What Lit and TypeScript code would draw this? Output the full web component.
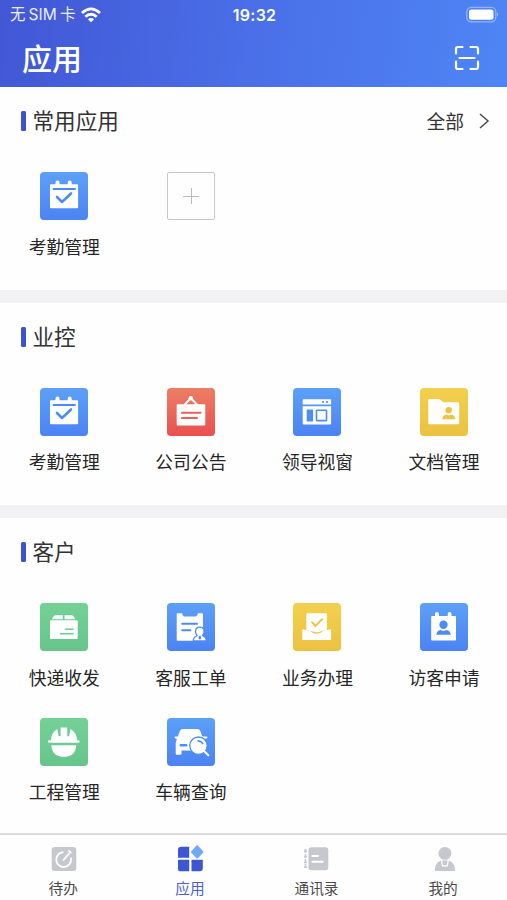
import { LitElement, html, css, svg, TemplateResult, SVGTemplateResult } from "lit";
import { customElement, property } from "lit/decorators.js";
import { classMap } from "lit/directives/class-map.js";

type Tone = "blue" | "red" | "yellow" | "green";
interface AppItem { icon: string; tone: Tone; label: string }
interface Tab { icon: string; label: string; active?: boolean }

/* Tile glyphs on a 48-unit grid: white shapes, "ink" takes the tile colour. */
const glyphs: Record<string, SVGTemplateResult> = {
  calendar: svg`
    <path d="M10.900 12.200h4.600v-1.700a2 2 0 0 1 4 0v1.700h8.200v-1.700a2 2 0 0 1 4 0v1.700h5.400q1 0 1 1v22q0 1-1 1H11q-1 0-1-1v-22q0-1 .9-1z"/>
    <path class="line" d="M13.500 17h21.500"/>
    <path class="line thick" d="M17 25l5 5 9-8.500"/>`,
  notice: svg`
    <rect x="9.700" y="16.300" width="28.600" height="21.300" rx="1"/>
    <path class="white" d="M17.500 17l6.300-7 6.500 7"/><circle cx="23.800" cy="10.200" r="2.200"/>
    <path class="line" d="M14.800 24.800h18.800M14.800 30h15.300"/>`,
  window: svg`
    <path d="M10.500 11.200h26.800q.8 0 .8.800v4.500H9.700V12q0-.8.8-.8zM9.700 18.200h28.400v17.400q0 .8-.8.800H10.500q-.8 0-.8-.8z"/>
    <circle class="ink" cx="30" cy="14" r="1.100"/><circle class="ink" cx="34" cy="14" r="1.100"/>
    <rect class="ink" x="13.700" y="21.500" width="6.400" height="11.900" rx=".6"/>
    <rect class="line slim" x="23.500" y="22.200" width="10" height="10.400" rx=".6"/>`,
  folder: svg`
    <path d="M9.300 11h9.400q.8 0 1.500.7l2.600 2q.6.500 1.400.5h14q1 0 1 1v20q0 1-1 1H9.300q-1 0-1-1V12q0-1 1-1z"/>
    <circle class="ink" cx="28.700" cy="22.300" r="3.200"/>
    <path class="ink" d="M22.300 31.200q0-3.900 4.200-4.600l2.200 1 2.200-1q4.400.7 4.400 4.600z"/>`,
  parcel: svg`
    <path d="M12 16.200l1-2.300q.8-1.700 2.600-1.700h7.200v4zM24.500 12.200h7q1.800 0 2.600 1.700l1 2.300H24.500zM10.800 17.300h26.100q.8 0 .8.800v17.100q0 .8-.8.800H10.800q-.8 0-.8-.8V18.100q0-.8.800-.8z"/>
    <path class="line slim" d="M25.500 26.200h7.500M20.500 30.800h12.500"/>`,
  ticket: svg`
    <path d="M9.700 11q0-.7.800-.7h4.700q0 3.100 2.600 3.100h10.400q2.600 0 2.600-3.100h4.400q.8 0 .8.700v26.700H10.500q-.8 0-.8-.8z"/>
    <path class="line" d="M15.200 20.800h14.800M15.200 27.300h8.300"/>
    <path class="cut" d="M26.300 38q0-3.600 3.200-5l.5-.7q-1.500-1.700-1.500-3.500 0-4.700 4.300-4.700t4.300 4.700q0 1.800-1.500 3.500l.5.700q3.200 1.400 3.200 5z"/>
    <path class="ink" d="M32.100 32.800h1.500l.7 2.400-1.400 1.500-1.500-1.500z"/>`,
  inbox: svg`
    <path d="M14.300 10.300h18.600q1 0 1 1v15.900l-5.200.8q-5 2.600-10 0l-5.400-.8V11.300q0-1 1-1z"/>
    <path class="line" d="M19 19.200l3.500 3.800 6.700-6.800"/>
    <path d="M9.300 27q0-.9 1-.8l4.200 1.400h2.700q2.600 3.200 6.500 3.200t6.500-3.200h2.700l4.200-1.400q1-.1 1 .8v9.300q0 .8-.8.800H10.100q-.8 0-.8-.8z"/>`,
  visitor: svg`
    <path d="M12 13h3v-2a1.900 1.900 0 0 1 3.800 0v2h8.900v-2a1.900 1.900 0 0 1 3.800 0v2H35q1 0 1 1v22.700q0 .8-.8.8H12q-.8 0-.8-.8V14q0-1 .8-1z"/>
    <circle class="ink" cx="23.500" cy="21.800" r="4.200"/>
    <path class="ink" d="M16.300 31.800q.3-4.300 4.200-4.800l3 1 3-1q4 .5 4.300 4.800z"/>`,
  helmet: svg`
    <path d="M9.200 22.300H11Q11.200 14.600 17.300 11l1.300 7.300h10.600l1.300-7.300q6.300 3.600 6.500 11.300h1.400a1.200 1.200 0 0 1 0 2.500H9.200a1.200 1.200 0 0 1 0-2.500zM20.600 9.600h6.600v9.400h-6.600zM11.300 27.200h25Q35.400 38.800 23.800 38.800T11.300 27.200z"/>`,
  car: svg`
    <path d="M15.800 11h14.500q2.200 0 3 2l2 5.400h4q1.500 0 1.200 1.100-.3 1.200-3 1.200L38.700 25v7.600H14.500v3.200q0 1-1 1h-3.800q-1 0-1-1V25l1.200-4.200q-2.200-.1-2.400-1.300-.1-1.100 1.200-1.100h2.200l2-5.400q.8-2 2.900-2z"/>
    <path class="line thick" d="M13.900 27.300h5.200"/>
    <circle class="cut" cx="31.500" cy="27.700" r="8.700"/>
    <path class="white" d="M37.300 33.300l4 4"/>
    <path class="line slim" d="M31.200 22.900q3.200.2 4.600 2.700"/>`,
};

/* Tab bar glyphs on a 26-unit grid. */
const tabGlyphs: Record<string, SVGTemplateResult> = {
  todo: svg`
    <rect x="1.700" y="1" width="24.600" height="24" rx="3"/>
    <path class="stroke" d="M12.700 6.200a7.400 7.400 0 1 0 8.300 6.300M13.500 14l5.300-6.200"/>
    <path class="stroke" d="M19 5l1.800 1.600"/>`,
  apps: svg`
    <path class="deep" d="M4 .8h8.200v11H1v-8q0-3 3-3zM1 13.800h11.200v11.400H3q-2 0-2-2zM14.500 13.800h11.300v8.400q0 3-3 3h-8.300z"/>
    <path class="light" d="M20.200-.7q.4 0 .7.300l5.400 5.800q.5.500 0 1l-5.400 5.800q-.7.600-1.400 0l-5.400-5.800q-.5-.5 0-1l5.400-5.800q.3-.3.700-.3z"/>`,
  contacts: svg`
    <rect x="5.500" y="1.300" width="19.800" height="23" rx="3"/>
    <path class="bar" d="M2.500 3v3.800M2.500 8.300v3.200M2.500 13v3.200M2.500 18v3.800M1 5.200h3M1 11h3M1 16.500h3M1 21.200h3"/>
    <path class="stroke" d="M9.300 10h5.700M9.300 15.800h10.500"/>`,
  me: svg`
    <circle cx="14.900" cy="7.400" r="6.400"/>
    <path d="M4.900 25q-.2-7.700 4.600-9.800l2.800-.8h5.200l2.800.8q4.800 2.100 4.600 9.800z"/>
    <path class="thin" d="M11.600 14.500l.9 5.300h4.800l.9-5.300"/>`,
};

@customElement("app-tile")
export class AppTile extends LitElement {
  @property({ attribute: false }) item?: AppItem;

  static styles = css`
    :host { display: flex; flex-direction: column; align-items: center; }
    .tile { width: 48px; height: 48px; border-radius: 4px; box-sizing: border-box; }
    .tile svg { display: block; width: 48px; height: 48px; fill: #fff; }
    .blue { --ink: #4b8df5; background: linear-gradient(#5ca0f7, #4b83f3); }
    .red { --ink: #ec6059; background: linear-gradient(#ec7e64, #ea5050); }
    .yellow { --ink: #ebc441; background: linear-gradient(#f2d04d, #ebc140); }
    .green { --ink: #6dcb90; background: linear-gradient(#74d096, #67c58c); }
    .ink { fill: var(--ink); }
    .line { fill: none; stroke: var(--ink); stroke-width: 1.900; stroke-linecap: round; stroke-linejoin: round; }
    .thick { stroke-width: 2.600; }
    .slim { stroke-width: 1.600; }
    .white { fill: none; stroke: #fff; stroke-width: 2; stroke-linecap: round; }
    .cut { fill: #fff; stroke: var(--ink); stroke-width: 1.300; }
    .label { margin-top: 12.500px; margin-bottom: 1px; font-size: 17.800px; line-height: 26px; color: #262626; white-space: nowrap; }
    .add { border: 1.500px solid #c9c9cb; border-radius: 2px; display: grid; place-items: center; }
    .tile.add svg { width: 18px; height: 18px; fill: none; stroke: #bbb; stroke-width: 1; }
  `;

  render(): TemplateResult {
    if (!this.item) {
      return html`<div class="tile add"><svg viewBox="0 0 18 18"><path d="M1 9.500h16M9.500 1v16" /></svg></div>`;
    }
    const { icon, tone, label } = this.item;
    return html`
      <div class=${classMap({ tile: true, [tone]: true })}>
        <svg viewBox="0 0 48 48">${glyphs[icon]}</svg>
      </div>
      <div class="label">${label}</div>
    `;
  }
}

@customElement("app-root")
export class AppRoot extends LitElement {
  private common: AppItem[] = [{ icon: "calendar", tone: "blue", label: "考勤管理" }];
  private control: AppItem[] = [
    { icon: "calendar", tone: "blue", label: "考勤管理" },
    { icon: "notice", tone: "red", label: "公司公告" },
    { icon: "window", tone: "blue", label: "领导视窗" },
    { icon: "folder", tone: "yellow", label: "文档管理" },
  ];
  private customer: AppItem[] = [
    { icon: "parcel", tone: "green", label: "快递收发" },
    { icon: "ticket", tone: "blue", label: "客服工单" },
    { icon: "inbox", tone: "yellow", label: "业务办理" },
    { icon: "visitor", tone: "blue", label: "访客申请" },
    { icon: "helmet", tone: "green", label: "工程管理" },
    { icon: "car", tone: "blue", label: "车辆查询" },
  ];
  private tabs: Tab[] = [
    { icon: "todo", label: "待办" },
    { icon: "apps", label: "应用", active: true },
    { icon: "contacts", label: "通讯录" },
    { icon: "me", label: "我的" },
  ];

  static styles = css`
    :host {
      display: flex; flex-direction: column; height: 900px; overflow: hidden;
      background: #fefefe; color: #2b2b2b;
      font-family: "Noto Sans CJK SC", sans-serif;
    }
    .header { height: 87px; flex: none; color: #fff; background: linear-gradient(97deg, #4257d5, #4a70e8 52%, #4e85f5); }
    .status { display: grid; grid-template-columns: 1fr auto 1fr; align-items: center; height: 30px; padding: 0 8px 0 10px; }
    .carrier { display: flex; align-items: center; gap: 6px; font: 15.500px/30px Inter, "Noto Sans CJK SC", sans-serif; color: #e9edff; }
    .carrier .name { display: flex; gap: 3px; }
    .carrier .latin { letter-spacing: .1px; }
    .carrier svg { width: 20px; height: 16px; fill: none; stroke: #fff; stroke-width: 2.800; }
    .carrier .dot { fill: #fff; stroke: none; }
    .time { font: 600 16px/30px Inter, sans-serif; letter-spacing: .3px; }
    .battery { justify-self: end; width: 33px; height: 17px; margin-top: -2px; }
    .bar { display: flex; justify-content: space-between; align-items: center; height: 56px; padding: 0 27px 0 22px; }
    .title { font-size: 30px; font-weight: 500; line-height: 44px; margin-top: -3px; }
    .scan { width: 26px; height: 26px; fill: none; stroke: #fff; stroke-width: 2.200; stroke-linecap: round; }
    .section { flex: none; height: 202.500px; }
    .last { flex: 1; }
    .gap { flex: none; height: 13px; background: #f2f2f4; }
    .head { display: flex; align-items: center; height: 68px; padding: 0 17px 0 21px; }
    .mark { width: 4.500px; height: 20px; border-radius: 1.500px; background: #3c52d0; margin-right: 7px; }
    .name-text { font-size: 21.600px; line-height: 32px; flex: 1; margin-top: -2px; color: #333; }
    .all { font-size: 18.800px; margin: -2px 14px 0 0; color: #333; }
    .chev { width: 12px; height: 18px; fill: none; stroke: #4a4a4a; stroke-width: 1.500; }
    .grid { display: grid; grid-template-columns: repeat(4, 126.600px); row-gap: 27px; padding: 17px 0 0 1px; }
    .tabs { flex: none; height: 67px; box-sizing: border-box; border-top: 2px solid #d9dadd; display: grid; grid-template-columns: repeat(4, 126.600px); }
    .tab { display: flex; flex-direction: column; align-items: center; padding-top: 11px; font-size: 14.700px; line-height: 22px; color: #4a4a4a; }
    .tab svg { width: 26px; height: 26px; margin-bottom: 5px; fill: #c5c8ce; overflow: visible; }
    .tab .stroke { fill: none; stroke: #fff; stroke-width: 1.900; stroke-linecap: round; }
    .tab .thin { fill: none; stroke: #fff; stroke-width: 1.300; }
    .tab .bar { fill: none; stroke: #c5c8ce; stroke-width: 1.600; }
    .deep { fill: #3d57d3; }
    .light { fill: #70a8f8; }
    .tab.on { color: #4d5fd5; }
  `;

  private section(title: string, items: AppItem[], first = false, last = false) {
    return html`
      <section class=${classMap({ section: true, last })}>
        <div class="head">
          <span class="mark"></span><span class="name-text">${title}</span>
          ${first ? html`<span class="all">全部</span><svg class="chev" viewBox="0 0 12 18"><path d="M2 2l8 7-8 7" /></svg>` : ""}
        </div>
        <div class="grid">
          ${items.map((item) => html`<app-tile .item=${item}></app-tile>`)}
          ${first ? html`<app-tile></app-tile>` : ""}
        </div>
      </section>
    `;
  }

  render() {
    return html`
      <header class="header">
        <div class="status">
          <div class="carrier">
            <span class="name"><span>无</span><span class="latin">SIM</span><span>卡</span></span>
            <svg viewBox="0 0 20 16">
              <path d="M1 6Q10-2.200 19 6M4.300 9.700q5.700-5 11.400 0" /><path class="dot" d="M6.900 12.200q3.100-2.400 6.200 0L10 15.300z" />
            </svg>
          </div>
          <div class="time">19:32</div>
          <svg class="battery" viewBox="0 0 33 17">
            <rect x=".8" y="1.300" width="29" height="14.500" rx="4.500" fill="none" stroke="#fff" stroke-opacity=".4" stroke-width="1.300" />
            <rect x="3" y="3.500" width="24.500" height="10.200" rx="2.500" fill="#fff" />
            <path d="M31 6.300q2 2.200 0 4.500z" fill="#fff" fill-opacity=".5" />
          </svg>
        </div>
        <div class="bar">
          <span class="title">应用</span>
          <svg class="scan" viewBox="0 0 26 26">
            <path d="M2 8.500V4q0-2 2-2h4.500M16.500 2H22q2 0 2 2v4.500M24 16.500V22q0 2-2 2h-5.500M8.500 24H4q-2 0-2-2v-5.500M5.500 13h15" />
          </svg>
        </div>
      </header>
      ${this.section("常用应用", this.common, true)}
      <div class="gap"></div>
      ${this.section("业控", this.control)}
      <div class="gap"></div>
      ${this.section("客户", this.customer, false, true)}
      <nav class="tabs">
        ${this.tabs.map((tab) => html`
          <div class=${classMap({ tab: true, on: !!tab.active })}>
            <svg viewBox="0 0 26 26">${tabGlyphs[tab.icon]}</svg><span>${tab.label}</span>
          </div>
        `)}
      </nav>
    `;
  }
}
